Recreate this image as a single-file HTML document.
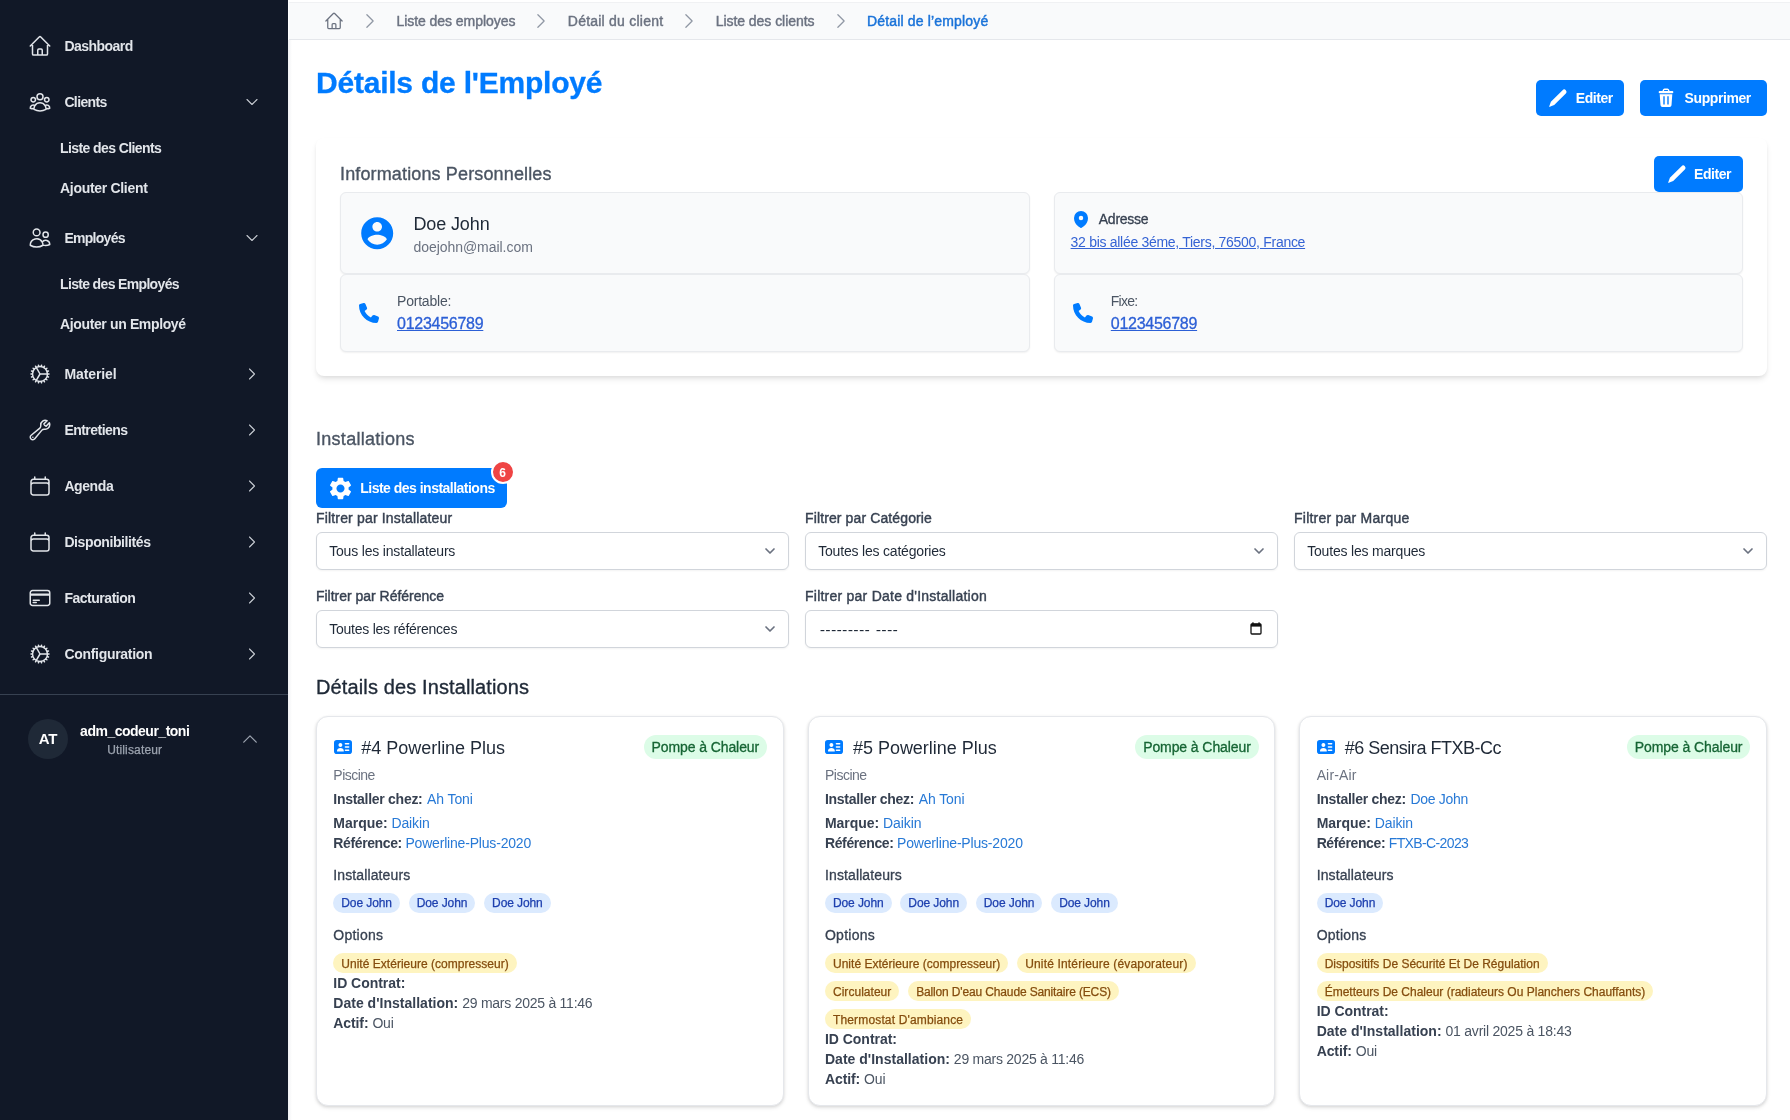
<!DOCTYPE html>
<html lang="fr">
<head>
<meta charset="utf-8">
<title>Détails de l'Employé</title>
<style>
*{box-sizing:border-box;margin:0;padding:0}
html,body{width:1790px;height:1120px;overflow:hidden;background:#fff}
body{font-family:"Liberation Sans",sans-serif;font-size:14px;color:#1f2937;position:relative}
a{text-decoration:none;color:inherit}
svg{display:block}
.abs{position:absolute}
/* ---------- sidebar ---------- */
#side{position:absolute;left:0;top:0;width:288px;height:1120px;background:#111827;color:#e5e7eb}
.nav{position:absolute;left:0;width:288px;height:24px;font-weight:700;font-size:14px;line-height:24px;letter-spacing:-.45px;white-space:nowrap}
.nav .ic{position:absolute;left:28px;top:0;width:24px;height:24px}
.nav .tx{position:absolute;left:64px;top:0}
.nav .ch{position:absolute;left:244px;top:4px;width:16px;height:16px}
.sub{position:absolute;left:60px;font-weight:700;font-size:14px;line-height:20px;letter-spacing:-.6px;white-space:nowrap}
#sdiv{position:absolute;left:0;top:694px;width:288px;height:1px;background:#374151}
#avatar{position:absolute;left:28px;top:719px;width:40px;height:40px;border-radius:50%;background:#1f2937;color:#fff;font-weight:700;font-size:15px;line-height:40px;text-align:center;letter-spacing:-.3px}
#uname{position:absolute;left:80px;top:721px;width:110px;text-align:center;font-weight:700;font-size:14px;line-height:20px;letter-spacing:-.5px;color:#fff;white-space:nowrap}
#urole{position:absolute;left:80px;top:741px;width:110px;text-align:center;font-size:12px;line-height:16px;color:#9ca3af;white-space:nowrap}
/* ---------- main ---------- */
#main{position:absolute;left:288px;top:0;width:1502px;height:1120px;background:#fff}
#lshadow{position:absolute;left:288px;top:40px;width:4px;height:1080px;background:linear-gradient(90deg,#f1f2f4,#fff)}
#crumb{position:absolute;left:289px;top:2px;width:1501px;height:38px;background:#f9fafb;border-top:1px solid #f0f1f3;border-bottom:1px solid #e5e7eb}
.bc{position:absolute;top:10px;font-size:14px;line-height:20px;color:#6b7280;white-space:nowrap;-webkit-text-stroke:.3px #6b7280}
.bc.cur{color:#1d78d9;-webkit-text-stroke:.35px #1d78d9}
.bsep{position:absolute;top:13px;width:10px;height:14px}
h1{position:absolute;left:316px;top:62px;font-size:30px;line-height:42px;font-weight:700;color:#007bff;letter-spacing:-.22px;white-space:nowrap;-webkit-text-stroke:.3px #007bff}
.btn{position:absolute;height:36px;border-radius:4px;background:#007bff;color:#fff;font-weight:700;font-size:14px;line-height:36px;letter-spacing:-.55px;white-space:nowrap}
.btn svg{position:absolute}
.btn span{position:absolute;top:0}

.t{position:absolute;white-space:nowrap}
.btn{border-radius:5px;background:#007bff}
.card{position:absolute;background:#fff;border-radius:8px;box-shadow:0 4px 6px -1px rgba(0,0,0,.1),0 2px 4px -1px rgba(0,0,0,.06)}
.ibox{position:absolute;background:#f9fafb;border:1px solid #e9ebee;border-radius:6px;box-shadow:0 1px 2px rgba(0,0,0,.06)}
.sel{position:absolute;width:473px;height:38px;background:#fff;border:1px solid #d1d5db;border-radius:6px;box-shadow:0 1px 2px rgba(0,0,0,.05)}
.icard{position:absolute;width:467.670px;height:390px;background:#fff;border:1px solid #e5e7eb;border-radius:12px;box-shadow:0 1px 3px rgba(0,0,0,.1),0 2px 4px rgba(0,0,0,.08)}
.tag{position:absolute;height:20px;border-radius:10px}
.tb{background:#dbeafe}.ty{background:#fef4c0}.tg{background:#dcfce7}
#root{position:absolute;left:0;top:0;width:1790px;height:1120px;will-change:transform}
</style>
</head>
<body>
<div id="root">
<div id="main"></div>
<div id="crumb"></div>
<div id="lshadow"></div>
<svg class="abs" style="left:324px;top:11px;width:20px;height:20px;color:#6b7280;" viewBox="0 0 24 24" fill="currentColor"><path fill="none" stroke="currentColor" stroke-width="1.5" stroke-linecap="round" stroke-linejoin="round" d="M2.25 12l8.954-8.955c.44-.439 1.152-.439 1.591 0L21.75 12M4.5 9.75v10.125c0 .621.504 1.125 1.125 1.125H9.75v-4.875c0-.621.504-1.125 1.125-1.125h2.25c.621 0 1.125.504 1.125 1.125V21h4.125c.621 0 1.125-.504 1.125-1.125V9.75M8.25 21h8.25"/></svg>
<svg class="abs" style="left:360px;top:11px;width:20px;height:20px;color:#9098a4;" viewBox="0 0 24 24" fill="currentColor"><path fill="none" stroke="currentColor" stroke-width="1.5" stroke-linecap="round" stroke-linejoin="round" d="M8.25 4.5l7.5 7.5-7.5 7.5"/></svg>
<svg class="abs" style="left:531px;top:11px;width:20px;height:20px;color:#9098a4;" viewBox="0 0 24 24" fill="currentColor"><path fill="none" stroke="currentColor" stroke-width="1.5" stroke-linecap="round" stroke-linejoin="round" d="M8.25 4.5l7.5 7.5-7.5 7.5"/></svg>
<svg class="abs" style="left:679px;top:11px;width:20px;height:20px;color:#9098a4;" viewBox="0 0 24 24" fill="currentColor"><path fill="none" stroke="currentColor" stroke-width="1.5" stroke-linecap="round" stroke-linejoin="round" d="M8.25 4.5l7.5 7.5-7.5 7.5"/></svg>
<svg class="abs" style="left:831px;top:11px;width:20px;height:20px;color:#9098a4;" viewBox="0 0 24 24" fill="currentColor"><path fill="none" stroke="currentColor" stroke-width="1.5" stroke-linecap="round" stroke-linejoin="round" d="M8.25 4.5l7.5 7.5-7.5 7.5"/></svg>
<span class="t" style="left:396.4px;top:10.6px;font-size:14px;line-height:20px;color:#6b7280;letter-spacing:-0.047px;-webkit-text-stroke:.42px currentColor;">Liste des employes</span>
<span class="t" style="left:567.8px;top:10.6px;font-size:14px;line-height:20px;color:#6b7280;letter-spacing:0.229px;-webkit-text-stroke:.42px currentColor;">Détail du client</span>
<span class="t" style="left:715.7px;top:10.6px;font-size:14px;line-height:20px;color:#6b7280;letter-spacing:-0.048px;-webkit-text-stroke:.42px currentColor;">Liste des clients</span>
<span class="t" style="left:867px;top:10.6px;font-size:14px;line-height:20px;color:#1a73d9;letter-spacing:0.163px;-webkit-text-stroke:.45px currentColor;">Détail de l’employé</span>
<h1>Détails de l'Employé</h1>
<div class="btn" style="left:1536px;top:80px;width:88px;height:36px"></div><svg class="abs" style="left:1546.3px;top:86.3px;width:24px;height:24px;color:#fff;" viewBox="0 0 24 24" fill="currentColor"><path d="M3 21L4.900 15.800L16.570 4.170A2.300 2.300 0 0 1 19.830 7.430L8.200 19.100Z"/></svg><span class="t" style="left:1575.8px;top:88.3px;font-size:14px;line-height:20px;color:#fff;font-weight:700;letter-spacing:-0.448px;">Editer</span>
<div class="btn" style="left:1640px;top:80px;width:127px;height:36px"></div><svg class="abs" style="left:1654.1px;top:86px;width:24px;height:24px;color:#fff;" viewBox="0 0 24 24" fill="currentColor"><path fill="none" stroke="currentColor" stroke-width="1.400" d="M9.300 5.400V4.600A1.300 1.300 0 0 1 10.600 3.300H13.400A1.300 1.300 0 0 1 14.700 4.600V5.400"/><rect x="4.700" y="5" width="14.600" height="2.300" rx="1"/><path fill-rule="evenodd" d="M5.700 8.300H18.300L17.500 19.300A1.900 1.900 0 0 1 15.600 21H8.400A1.900 1.900 0 0 1 6.500 19.300ZM9.300 10.300V18.500H10.700V10.300ZM13.300 10.300V18.500H14.700V10.300Z"/></svg><span class="t" style="left:1684.6px;top:88.3px;font-size:14px;line-height:20px;color:#fff;font-weight:700;letter-spacing:-0.424px;">Supprimer</span>
<div class="card" style="left:316px;top:138px;width:1451px;height:238px"></div>
<span class="t" style="left:340px;top:160.3px;font-size:18px;line-height:28px;color:#4b5563;letter-spacing:0.140px;-webkit-text-stroke:.35px currentColor;">Informations Personnelles</span>
<div class="btn" style="left:1654px;top:156px;width:89px;height:36px"></div><svg class="abs" style="left:1664.6px;top:162.3px;width:24px;height:24px;color:#fff;" viewBox="0 0 24 24" fill="currentColor"><path d="M3 21L4.900 15.800L16.570 4.170A2.300 2.300 0 0 1 19.830 7.430L8.200 19.100Z"/></svg><span class="t" style="left:1694.1px;top:164.3px;font-size:14px;line-height:20px;color:#fff;font-weight:700;letter-spacing:-0.448px;">Editer</span>
<div class="ibox" style="left:340px;top:192px;width:689.5px;height:82px"></div>
<div class="ibox" style="left:340px;top:274px;width:689.5px;height:78px"></div>
<div class="ibox" style="left:1053.5px;top:192px;width:689.5px;height:82px"></div>
<div class="ibox" style="left:1053.5px;top:274px;width:689.5px;height:78px"></div>
<svg class="abs" style="left:357.8px;top:213.8px;width:38.4px;height:38.4px;color:#007bff;" viewBox="0 0 24 24" fill="currentColor"><path d="M12 2C6.48 2 2 6.48 2 12s4.48 10 10 10 10-4.48 10-10S17.52 2 12 2zm0 3c1.66 0 3 1.34 3 3s-1.34 3-3 3-3-1.34-3-3 1.34-3 3-3zm0 14.2c-2.5 0-4.71-1.28-6-3.22.03-1.99 4-3.08 6-3.08 1.99 0 5.97 1.09 6 3.08-1.29 1.94-3.5 3.22-6 3.22z"/></svg>
<span class="t" style="left:413.4px;top:209.6px;font-size:18px;line-height:28px;color:#1f2937;letter-spacing:-0.108px;">Doe John</span>
<span class="t" style="left:413.4px;top:237.3px;font-size:14px;line-height:20px;color:#6b7280;letter-spacing:-0.040px;">doejohn@mail.com</span>
<svg class="abs" style="left:359px;top:303px;width:20px;height:20px;color:#007bff;" viewBox="0 0 512 512" fill="currentColor"><path d="M164.9 24.6c-7.7-18.6-28-28.5-47.4-23.2l-88 24C12.1 30.2 0 46 0 64C0 311.4 200.6 512 448 512c18 0 33.8-12.1 38.6-29.5l24-88c5.3-19.4-4.6-39.7-23.2-47.4l-96-40c-16.300-6.800-35.200-2.100-46.300 11.600L304.700 368C234.300 334.700 177.300 277.700 144 207.300L193.300 167c13.700-11.200 18.400-30 11.600-46.300l-40-96z"/></svg>
<span class="t" style="left:397px;top:291.3px;font-size:14px;line-height:20px;color:#4b5563;letter-spacing:-0.205px;">Portable:</span>
<span class="t" style="left:397px;top:311.6px;font-size:16px;line-height:24px;color:#2c5fd6;letter-spacing:-0.268px;text-decoration:underline;text-underline-offset:1px;-webkit-text-stroke:.3px currentColor;">0123456789</span>
<svg class="abs" style="left:1071px;top:209px;width:20px;height:20px;color:#007bff;" viewBox="0 0 20 20" fill="currentColor"><path fill-rule="evenodd" clip-rule="evenodd" d="M9.69 18.933l.003.001C9.89 19.02 10 19 10 19s.11.02.308-.066l.002-.001.006-.003.018-.008a5.741 5.741 0 00.281-.14c.186-.096.446-.24.757-.433.62-.384 1.445-.966 2.274-1.765C15.302 14.988 17 12.493 17 9A7 7 0 103 9c0 3.492 1.698 5.988 3.355 7.584a13.731 13.731 0 002.273 1.765 11.842 11.842 0 00.976.544l.062.029.018.008.006.003zM10 11.250a2.250 2.250 0 100-4.500 2.250 2.250 0 000 4.500z"/></svg>
<span class="t" style="left:1098.8px;top:209.3px;font-size:14px;line-height:20px;color:#374151;letter-spacing:-0.266px;-webkit-text-stroke:.3px currentColor;">Adresse</span>
<span class="t" style="left:1070.6px;top:231.8px;font-size:14px;line-height:20px;color:#3563d4;letter-spacing:-0.293px;text-decoration:underline;text-underline-offset:1px;">32 bis allée 3éme, Tiers, 76500, France</span>
<svg class="abs" style="left:1073.2px;top:303px;width:20px;height:20px;color:#007bff;" viewBox="0 0 512 512" fill="currentColor"><path d="M164.9 24.6c-7.7-18.6-28-28.5-47.4-23.2l-88 24C12.1 30.2 0 46 0 64C0 311.4 200.6 512 448 512c18 0 33.8-12.1 38.6-29.5l24-88c5.3-19.4-4.6-39.7-23.2-47.4l-96-40c-16.300-6.800-35.200-2.100-46.300 11.600L304.700 368C234.300 334.700 177.300 277.700 144 207.300L193.300 167c13.700-11.200 18.400-30 11.600-46.300l-40-96z"/></svg>
<span class="t" style="left:1110.8px;top:291.3px;font-size:14px;line-height:20px;color:#4b5563;letter-spacing:-0.729px;">Fixe:</span>
<span class="t" style="left:1110.8px;top:311.6px;font-size:16px;line-height:24px;color:#2c5fd6;letter-spacing:-0.268px;text-decoration:underline;text-underline-offset:1px;-webkit-text-stroke:.3px currentColor;">0123456789</span>
<span class="t" style="left:316px;top:424.7px;font-size:18px;line-height:28px;color:#4b5563;letter-spacing:0.287px;-webkit-text-stroke:.35px currentColor;">Installations</span>
<div class="btn" style="left:316px;top:468px;width:191px;height:40px;border-radius:6px"></div>
<svg class="abs" style="left:326.5px;top:474.5px;width:27px;height:27px;color:#fff;" viewBox="0 0 24 24" fill="currentColor"><path d="M19.14 12.94c.04-.3.06-.61.06-.94 0-.32-.02-.64-.07-.94l2.030-1.580c.180-.140.230-.410.120-.610l-1.920-3.320c-.120-.220-.370-.290-.590-.220l-2.390.960c-.500-.380-1.030-.700-1.620-.940l-.360-2.540c-.040-.240-.240-.410-.480-.410h-3.840c-.240 0-.430.170-.470.410l-.360 2.540c-.590.240-1.130.570-1.620.940l-2.390-.960c-.220-.080-.470 0-.590.220L2.740 8.870c-.120.210-.080.470.120.610l2.030 1.580c-.050.300-.090.630-.090.940s.020.640.070.940l-2.030 1.580c-.180.140-.230.410-.120.610l1.920 3.320c.120.220.370.290.590.220l2.390-.960c.500.380 1.030.700 1.620.940l.360 2.540c.050.240.240.410.480.410h3.840c.240 0 .440-.170.470-.410l.360-2.540c.590-.240 1.130-.560 1.620-.940l2.390.960c.220.080.470 0 .590-.220l1.920-3.320c.120-.220.070-.470-.120-.610l-2.010-1.580zM12 15.600c-1.980 0-3.600-1.620-3.600-3.600s1.620-3.600 3.600-3.600 3.600 1.620 3.600 3.600-1.620 3.600-3.600 3.600z"/></svg>
<span class="t" style="left:360.3px;top:478.3px;font-size:14px;line-height:20px;color:#fff;font-weight:700;letter-spacing:-0.516px;">Liste des installations</span>
<div class="abs" style="left:491px;top:460px;width:24px;height:24px;border-radius:50%;background:#ef4444;border:2px solid #fff"></div>
<span class="t" style="left:499.3px;top:465.7px;font-size:12px;line-height:14px;color:#fff;font-weight:700;letter-spacing:-0.487px;">6</span>
<span class="t" style="left:316px;top:507.7px;font-size:14px;line-height:20px;color:#374151;letter-spacing:0.167px;-webkit-text-stroke:.4px currentColor;">Filtrer par Installateur</span><div class="sel" style="left:316px;top:532px"></div><span class="t" style="left:329.2px;top:541.1px;font-size:14px;line-height:20px;color:#1f2937;letter-spacing:-0.180px;">Tous les installateurs</span><svg class="abs" style="left:759.7px;top:541px;width:20px;height:20px;color:#6b7280;" viewBox="0 0 20 20" fill="currentColor"><path fill="none" stroke="currentColor" stroke-width="1.700" stroke-linecap="round" stroke-linejoin="round" d="M6 8l4 4 4-4"/></svg>
<span class="t" style="left:805px;top:507.7px;font-size:14px;line-height:20px;color:#374151;letter-spacing:0.119px;-webkit-text-stroke:.4px currentColor;">Filtrer par Catégorie</span><div class="sel" style="left:805px;top:532px"></div><span class="t" style="left:818.2px;top:541.1px;font-size:14px;line-height:20px;color:#1f2937;letter-spacing:-0.192px;">Toutes les catégories</span><svg class="abs" style="left:1248.7px;top:541px;width:20px;height:20px;color:#6b7280;" viewBox="0 0 20 20" fill="currentColor"><path fill="none" stroke="currentColor" stroke-width="1.700" stroke-linecap="round" stroke-linejoin="round" d="M6 8l4 4 4-4"/></svg>
<span class="t" style="left:1294px;top:507.7px;font-size:14px;line-height:20px;color:#374151;letter-spacing:0.235px;-webkit-text-stroke:.4px currentColor;">Filtrer par Marque</span><div class="sel" style="left:1294px;top:532px"></div><span class="t" style="left:1307.2px;top:541.1px;font-size:14px;line-height:20px;color:#1f2937;letter-spacing:-0.189px;">Toutes les marques</span><svg class="abs" style="left:1737.7px;top:541px;width:20px;height:20px;color:#6b7280;" viewBox="0 0 20 20" fill="currentColor"><path fill="none" stroke="currentColor" stroke-width="1.700" stroke-linecap="round" stroke-linejoin="round" d="M6 8l4 4 4-4"/></svg>
<span class="t" style="left:316px;top:586.3px;font-size:14px;line-height:20px;color:#374151;letter-spacing:-0.019px;-webkit-text-stroke:.4px currentColor;">Filtrer par Référence</span><div class="sel" style="left:316px;top:610px"></div><span class="t" style="left:329.2px;top:619.1px;font-size:14px;line-height:20px;color:#1f2937;letter-spacing:-0.242px;">Toutes les références</span><svg class="abs" style="left:759.7px;top:619px;width:20px;height:20px;color:#6b7280;" viewBox="0 0 20 20" fill="currentColor"><path fill="none" stroke="currentColor" stroke-width="1.700" stroke-linecap="round" stroke-linejoin="round" d="M6 8l4 4 4-4"/></svg>
<span class="t" style="left:805px;top:586.3px;font-size:14px;line-height:20px;color:#374151;letter-spacing:0.237px;-webkit-text-stroke:.4px currentColor;">Filtrer par Date d'Installation</span><div class="sel" style="left:805px;top:610px"></div><span class="t" style="left:818.2px;top:620.6px;font-size:14px;line-height:20px;color:#1f2937;letter-spacing:-2.795px;font-family:'Liberation Mono',monospace;">--------- ----</span><svg class="abs" style="left:1250.2px;top:622.3px;width:12px;height:13px" viewBox="0 0 12 13"><rect x="1" y="1.800" width="10" height="10.200" rx="1" fill="none" stroke="#111" stroke-width="1.300"/><rect x="1" y="1.800" width="10" height="2.800" fill="#111"/><rect x="2.300" y="0.300" width="1.300" height="2" fill="#111"/><rect x="8.400" y="0.300" width="1.300" height="2" fill="#111"/></svg>
<span class="t" style="left:316px;top:673.3px;font-size:20px;line-height:28px;color:#1f2937;letter-spacing:0.124px;-webkit-text-stroke:.35px currentColor;">Détails des Installations</span>
<div class="icard" style="left:316px;top:716px"></div><svg class="abs" style="left:333.8px;top:738.6px;width:18px;height:16px;color:#007bff;" viewBox="0 0 576 512" fill="currentColor"><path fill-rule="evenodd" d="M90 32H486A90 90 0 0 1 576 122V390A90 90 0 0 1 486 480H90A90 90 0 0 1 0 390V122A90 90 0 0 1 90 32ZM205 130a62 62 0 1 0 .1 0ZM95 385c0-62 50-100 110-100s110 38 110 100c0 12-8 18-18 18H113c-10 0-18-6-18-18ZM365 130H470a18 18 0 0 1 0 46H365a18 18 0 0 1 0-46ZM365 232H470a18 18 0 0 1 0 46H365a18 18 0 0 1 0-46ZM365 334H470a18 18 0 0 1 0 46H365a18 18 0 0 1 0-46Z"/></svg><span class="t" style="left:361.3px;top:733.6px;font-size:18px;line-height:28px;color:#1f2937;letter-spacing:-0.023px;">#4 Powerline Plus</span><div class="tag tg" style="left:643.6px;top:735px;width:123.400px;height:24px;border-radius:12px"></div><span class="t" style="left:651.4999999999999px;top:737.2px;font-size:14px;line-height:20px;color:#166534;letter-spacing:-0.090px;-webkit-text-stroke:.3px currentColor;">Pompe à Chaleur</span><span class="t" style="left:333.3px;top:765.3px;font-size:14px;line-height:20px;color:#6b7280;letter-spacing:-0.506px;">Piscine</span><span class="t" style="left:333.3px;top:789.3px;font-size:14px;line-height:20px;color:#374151;font-weight:700;letter-spacing:-0.278px;">Installer chez:</span><span class="t" style="left:427.1px;top:789.3px;font-size:14px;line-height:20px;color:#2779d6;letter-spacing:-0.108px;">Ah Toni</span><span class="t" style="left:333.3px;top:813.3px;font-size:14px;line-height:20px;color:#374151;font-weight:700;letter-spacing:-0.022px;">Marque:</span><span class="t" style="left:391.40000000000003px;top:813.3px;font-size:14px;line-height:20px;color:#2779d6;letter-spacing:-0.101px;">Daikin</span><span class="t" style="left:333.3px;top:833.2px;font-size:14px;line-height:20px;color:#374151;font-weight:700;letter-spacing:-0.378px;">Référence:</span><span class="t" style="left:405.4px;top:833.2px;font-size:14px;line-height:20px;color:#2779d6;letter-spacing:-0.184px;">Powerline-Plus-2020</span><span class="t" style="left:333.3px;top:865.2px;font-size:14px;line-height:20px;color:#374151;letter-spacing:0.117px;-webkit-text-stroke:.3px currentColor;">Installateurs</span><div class="tag tb" style="left:333.3px;top:893.2px;width:66.6px"></div><span class="t" style="left:341.3px;top:895.4px;font-size:12px;line-height:16px;color:#1e40af;letter-spacing:-0.097px;-webkit-text-stroke:.25px currentColor;">Doe John</span><div class="tag tb" style="left:408.7px;top:893.2px;width:66.6px"></div><span class="t" style="left:416.7px;top:895.4px;font-size:12px;line-height:16px;color:#1e40af;letter-spacing:-0.097px;-webkit-text-stroke:.25px currentColor;">Doe John</span><div class="tag tb" style="left:484.1px;top:893.2px;width:66.6px"></div><span class="t" style="left:492.09999999999997px;top:895.4px;font-size:12px;line-height:16px;color:#1e40af;letter-spacing:-0.097px;-webkit-text-stroke:.25px currentColor;">Doe John</span><span class="t" style="left:333.3px;top:925.2px;font-size:14px;line-height:20px;color:#374151;letter-spacing:0.250px;-webkit-text-stroke:.3px currentColor;">Options</span><div class="tag ty" style="left:333.3px;top:953.3px;width:183.4px"></div><span class="t" style="left:341.3px;top:955.5px;font-size:12px;line-height:16px;color:#854d0e;letter-spacing:0.022px;-webkit-text-stroke:.25px currentColor;">Unité Extérieure (compresseur)</span><span class="t" style="left:333.3px;top:973.3px;font-size:14px;line-height:20px;color:#374151;font-weight:700;letter-spacing:-0.030px;">ID Contrat:</span><span class="t" style="left:333.3px;top:993.3px;font-size:14px;line-height:20px;color:#374151;font-weight:700;letter-spacing:0.016px;">Date d'Installation:</span><span class="t" style="left:462.2px;top:993.3px;font-size:14px;line-height:20px;color:#4b5563;letter-spacing:-0.249px;">29 mars 2025 à 11:46</span><span class="t" style="left:333.3px;top:1013.3px;font-size:14px;line-height:20px;color:#374151;font-weight:700;letter-spacing:-0.097px;">Actif:</span><span class="t" style="left:372.4px;top:1013.3px;font-size:14px;line-height:20px;color:#4b5563;letter-spacing:-0.166px;">Oui</span>
<div class="icard" style="left:807.67px;top:716px"></div><svg class="abs" style="left:825.47px;top:738.6px;width:18px;height:16px;color:#007bff;" viewBox="0 0 576 512" fill="currentColor"><path fill-rule="evenodd" d="M90 32H486A90 90 0 0 1 576 122V390A90 90 0 0 1 486 480H90A90 90 0 0 1 0 390V122A90 90 0 0 1 90 32ZM205 130a62 62 0 1 0 .1 0ZM95 385c0-62 50-100 110-100s110 38 110 100c0 12-8 18-18 18H113c-10 0-18-6-18-18ZM365 130H470a18 18 0 0 1 0 46H365a18 18 0 0 1 0-46ZM365 232H470a18 18 0 0 1 0 46H365a18 18 0 0 1 0-46ZM365 334H470a18 18 0 0 1 0 46H365a18 18 0 0 1 0-46Z"/></svg><span class="t" style="left:852.9699999999999px;top:733.6px;font-size:18px;line-height:28px;color:#1f2937;letter-spacing:-0.023px;">#5 Powerline Plus</span><div class="tag tg" style="left:1135.27px;top:735px;width:123.400px;height:24px;border-radius:12px"></div><span class="t" style="left:1143.17px;top:737.2px;font-size:14px;line-height:20px;color:#166534;letter-spacing:-0.090px;-webkit-text-stroke:.3px currentColor;">Pompe à Chaleur</span><span class="t" style="left:824.9699999999999px;top:765.3px;font-size:14px;line-height:20px;color:#6b7280;letter-spacing:-0.506px;">Piscine</span><span class="t" style="left:824.9699999999999px;top:789.3px;font-size:14px;line-height:20px;color:#374151;font-weight:700;letter-spacing:-0.278px;">Installer chez:</span><span class="t" style="left:918.77px;top:789.3px;font-size:14px;line-height:20px;color:#2779d6;letter-spacing:-0.108px;">Ah Toni</span><span class="t" style="left:824.9699999999999px;top:813.3px;font-size:14px;line-height:20px;color:#374151;font-weight:700;letter-spacing:-0.022px;">Marque:</span><span class="t" style="left:883.0699999999998px;top:813.3px;font-size:14px;line-height:20px;color:#2779d6;letter-spacing:-0.101px;">Daikin</span><span class="t" style="left:824.9699999999999px;top:833.2px;font-size:14px;line-height:20px;color:#374151;font-weight:700;letter-spacing:-0.378px;">Référence:</span><span class="t" style="left:897.0699999999999px;top:833.2px;font-size:14px;line-height:20px;color:#2779d6;letter-spacing:-0.184px;">Powerline-Plus-2020</span><span class="t" style="left:824.9699999999999px;top:865.2px;font-size:14px;line-height:20px;color:#374151;letter-spacing:0.117px;-webkit-text-stroke:.3px currentColor;">Installateurs</span><div class="tag tb" style="left:824.97px;top:893.2px;width:66.6px"></div><span class="t" style="left:832.9699999999999px;top:895.4px;font-size:12px;line-height:16px;color:#1e40af;letter-spacing:-0.097px;-webkit-text-stroke:.25px currentColor;">Doe John</span><div class="tag tb" style="left:900.37px;top:893.2px;width:66.6px"></div><span class="t" style="left:908.3699999999999px;top:895.4px;font-size:12px;line-height:16px;color:#1e40af;letter-spacing:-0.097px;-webkit-text-stroke:.25px currentColor;">Doe John</span><div class="tag tb" style="left:975.77px;top:893.2px;width:66.6px"></div><span class="t" style="left:983.7699999999999px;top:895.4px;font-size:12px;line-height:16px;color:#1e40af;letter-spacing:-0.097px;-webkit-text-stroke:.25px currentColor;">Doe John</span><div class="tag tb" style="left:1051.17px;top:893.2px;width:66.6px"></div><span class="t" style="left:1059.1699999999998px;top:895.4px;font-size:12px;line-height:16px;color:#1e40af;letter-spacing:-0.097px;-webkit-text-stroke:.25px currentColor;">Doe John</span><span class="t" style="left:824.9699999999999px;top:925.2px;font-size:14px;line-height:20px;color:#374151;letter-spacing:0.250px;-webkit-text-stroke:.3px currentColor;">Options</span><div class="tag ty" style="left:824.97px;top:953.3px;width:183.4px"></div><span class="t" style="left:832.9699999999999px;top:955.5px;font-size:12px;line-height:16px;color:#854d0e;letter-spacing:0.022px;-webkit-text-stroke:.25px currentColor;">Unité Extérieure (compresseur)</span><div class="tag ty" style="left:1017.17px;top:953.3px;width:178.4px"></div><span class="t" style="left:1025.17px;top:955.5px;font-size:12px;line-height:16px;color:#854d0e;letter-spacing:0.166px;-webkit-text-stroke:.25px currentColor;">Unité Intérieure (évaporateur)</span><div class="tag ty" style="left:824.97px;top:981.3px;width:74.4px"></div><span class="t" style="left:832.9699999999999px;top:983.5px;font-size:12px;line-height:16px;color:#854d0e;letter-spacing:0.034px;-webkit-text-stroke:.25px currentColor;">Circulateur</span><div class="tag ty" style="left:908.17px;top:981.3px;width:210.7px"></div><span class="t" style="left:916.17px;top:983.5px;font-size:12px;line-height:16px;color:#854d0e;letter-spacing:-0.144px;-webkit-text-stroke:.25px currentColor;">Ballon D'eau Chaude Sanitaire (ECS)</span><div class="tag ty" style="left:824.97px;top:1009.3px;width:146.2px"></div><span class="t" style="left:832.9699999999999px;top:1011.5px;font-size:12px;line-height:16px;color:#854d0e;letter-spacing:0.152px;-webkit-text-stroke:.25px currentColor;">Thermostat D'ambiance</span><span class="t" style="left:824.9699999999999px;top:1029.3px;font-size:14px;line-height:20px;color:#374151;font-weight:700;letter-spacing:-0.030px;">ID Contrat:</span><span class="t" style="left:824.9699999999999px;top:1049.3px;font-size:14px;line-height:20px;color:#374151;font-weight:700;letter-spacing:0.016px;">Date d'Installation:</span><span class="t" style="left:953.8699999999999px;top:1049.3px;font-size:14px;line-height:20px;color:#4b5563;letter-spacing:-0.249px;">29 mars 2025 à 11:46</span><span class="t" style="left:824.9699999999999px;top:1069.3px;font-size:14px;line-height:20px;color:#374151;font-weight:700;letter-spacing:-0.097px;">Actif:</span><span class="t" style="left:864.0699999999999px;top:1069.3px;font-size:14px;line-height:20px;color:#4b5563;letter-spacing:-0.166px;">Oui</span>
<div class="icard" style="left:1299.33px;top:716px"></div><svg class="abs" style="left:1317.13px;top:738.6px;width:18px;height:16px;color:#007bff;" viewBox="0 0 576 512" fill="currentColor"><path fill-rule="evenodd" d="M90 32H486A90 90 0 0 1 576 122V390A90 90 0 0 1 486 480H90A90 90 0 0 1 0 390V122A90 90 0 0 1 90 32ZM205 130a62 62 0 1 0 .1 0ZM95 385c0-62 50-100 110-100s110 38 110 100c0 12-8 18-18 18H113c-10 0-18-6-18-18ZM365 130H470a18 18 0 0 1 0 46H365a18 18 0 0 1 0-46ZM365 232H470a18 18 0 0 1 0 46H365a18 18 0 0 1 0-46ZM365 334H470a18 18 0 0 1 0 46H365a18 18 0 0 1 0-46Z"/></svg><span class="t" style="left:1344.6299999999999px;top:733.6px;font-size:18px;line-height:28px;color:#1f2937;letter-spacing:-0.476px;">#6 Sensira FTXB-Cc</span><div class="tag tg" style="left:1626.93px;top:735px;width:123.400px;height:24px;border-radius:12px"></div><span class="t" style="left:1634.83px;top:737.2px;font-size:14px;line-height:20px;color:#166534;letter-spacing:-0.090px;-webkit-text-stroke:.3px currentColor;">Pompe à Chaleur</span><span class="t" style="left:1316.6299999999999px;top:765.3px;font-size:14px;line-height:20px;color:#6b7280;letter-spacing:0.158px;">Air-Air</span><span class="t" style="left:1316.6299999999999px;top:789.3px;font-size:14px;line-height:20px;color:#374151;font-weight:700;letter-spacing:-0.278px;">Installer chez:</span><span class="t" style="left:1410.4299999999998px;top:789.3px;font-size:14px;line-height:20px;color:#2779d6;letter-spacing:-0.305px;">Doe John</span><span class="t" style="left:1316.6299999999999px;top:813.3px;font-size:14px;line-height:20px;color:#374151;font-weight:700;letter-spacing:-0.022px;">Marque:</span><span class="t" style="left:1374.7299999999998px;top:813.3px;font-size:14px;line-height:20px;color:#2779d6;letter-spacing:-0.101px;">Daikin</span><span class="t" style="left:1316.6299999999999px;top:833.2px;font-size:14px;line-height:20px;color:#374151;font-weight:700;letter-spacing:-0.378px;">Référence:</span><span class="t" style="left:1388.7299999999998px;top:833.2px;font-size:14px;line-height:20px;color:#2779d6;letter-spacing:-0.624px;">FTXB-C-2023</span><span class="t" style="left:1316.6299999999999px;top:865.2px;font-size:14px;line-height:20px;color:#374151;letter-spacing:0.117px;-webkit-text-stroke:.3px currentColor;">Installateurs</span><div class="tag tb" style="left:1316.63px;top:893.2px;width:66.6px"></div><span class="t" style="left:1324.6299999999999px;top:895.4px;font-size:12px;line-height:16px;color:#1e40af;letter-spacing:-0.097px;-webkit-text-stroke:.25px currentColor;">Doe John</span><span class="t" style="left:1316.6299999999999px;top:925.2px;font-size:14px;line-height:20px;color:#374151;letter-spacing:0.250px;-webkit-text-stroke:.3px currentColor;">Options</span><div class="tag ty" style="left:1316.63px;top:953.3px;width:231px"></div><span class="t" style="left:1324.6299999999999px;top:955.5px;font-size:12px;line-height:16px;color:#854d0e;letter-spacing:0.006px;-webkit-text-stroke:.25px currentColor;">Dispositifs De Sécurité Et De Régulation</span><div class="tag ty" style="left:1316.63px;top:981.3px;width:336.5px"></div><span class="t" style="left:1324.6299999999999px;top:983.5px;font-size:12px;line-height:16px;color:#854d0e;-webkit-text-stroke:.25px currentColor;">Émetteurs De Chaleur (radiateurs Ou Planchers Chauffants)</span><span class="t" style="left:1316.6299999999999px;top:1001.3px;font-size:14px;line-height:20px;color:#374151;font-weight:700;letter-spacing:-0.030px;">ID Contrat:</span><span class="t" style="left:1316.6299999999999px;top:1021.3px;font-size:14px;line-height:20px;color:#374151;font-weight:700;letter-spacing:0.016px;">Date d'Installation:</span><span class="t" style="left:1445.53px;top:1021.3px;font-size:14px;line-height:20px;color:#4b5563;letter-spacing:-0.227px;">01 avril 2025 à 18:43</span><span class="t" style="left:1316.6299999999999px;top:1041.3px;font-size:14px;line-height:20px;color:#374151;font-weight:700;letter-spacing:-0.097px;">Actif:</span><span class="t" style="left:1355.73px;top:1041.3px;font-size:14px;line-height:20px;color:#4b5563;letter-spacing:-0.166px;">Oui</span>
<div id="side"></div>
<svg class="abs" style="left:28px;top:34px;width:24px;height:24px;color:#e2e5ea" viewBox="0 0 24 24" fill="none" stroke="currentColor" stroke-width="1.5" stroke-linecap="round" stroke-linejoin="round"><path d="M2.25 12l8.954-8.955c.44-.439 1.152-.439 1.591 0L21.75 12M4.5 9.75v10.125c0 .621.504 1.125 1.125 1.125H9.75v-4.875c0-.621.504-1.125 1.125-1.125h2.25c.621 0 1.125.504 1.125 1.125V21h4.125c.621 0 1.125-.504 1.125-1.125V9.75M8.25 21h8.25"/></svg>
<span class="t" style="left:64.4px;top:34.2px;font-size:14px;line-height:24px;color:#e2e5ea;font-weight:700;letter-spacing:-0.536px;">Dashboard</span>
<svg class="abs" style="left:28px;top:90px;width:24px;height:24px;color:#e2e5ea" viewBox="0 0 24 24" fill="none" stroke="currentColor" stroke-width="1.5" stroke-linecap="round" stroke-linejoin="round"><path d="M18 18.72a9.094 9.094 0 003.741-.479 3 3 0 00-4.682-2.72m.94 3.198l.001.031c0 .225-.012.447-.037.666A11.944 11.944 0 0112 21c-2.17 0-4.207-.576-5.963-1.584A6.062 6.062 0 016 18.719m12 0a5.971 5.971 0 00-.941-3.197m0 0A5.995 5.995 0 0012 12.75a5.995 5.995 0 00-5.058 2.772m0 0a3 3 0 00-4.681 2.72 8.986 8.986 0 003.74.477m.94-3.197a5.971 5.971 0 00-.94 3.197M15 6.75a3 3 0 11-6 0 3 3 0 016 0zm6 3a2.25 2.25 0 11-4.5 0 2.25 2.25 0 014.5 0zm-13.5 0a2.25 2.25 0 11-4.5 0 2.25 2.25 0 014.5 0z"/></svg>
<span class="t" style="left:64.4px;top:90.2px;font-size:14px;line-height:24px;color:#e2e5ea;font-weight:700;letter-spacing:-0.627px;">Clients</span>
<svg class="abs" style="left:244px;top:94px;width:16px;height:16px;color:#c9cdd4" viewBox="0 0 24 24" fill="none" stroke="currentColor" stroke-width="1.6" stroke-linecap="round" stroke-linejoin="round"><path d="M19.5 8.25l-7.5 7.5-7.5-7.5"/></svg>
<svg class="abs" style="left:28px;top:226px;width:24px;height:24px;color:#e2e5ea" viewBox="0 0 24 24" fill="none" stroke="currentColor" stroke-width="1.5" stroke-linecap="round" stroke-linejoin="round"><path d="M15 19.128a9.38 9.38 0 002.625.372 9.337 9.337 0 004.121-.952 4.125 4.125 0 00-7.533-2.493M15 19.128v-.003c0-1.113-.285-2.16-.786-3.07M15 19.128v.106A12.318 12.318 0 018.624 21c-2.331 0-4.512-.645-6.374-1.766l-.001-.109a6.375 6.375 0 0111.964-3.07M12 6.375a3.375 3.375 0 11-6.75 0 3.375 3.375 0 016.75 0zm8.25 2.25a2.625 2.625 0 11-5.25 0 2.625 2.625 0 015.25 0z"/></svg>
<span class="t" style="left:64.4px;top:226.2px;font-size:14px;line-height:24px;color:#e2e5ea;font-weight:700;letter-spacing:-0.718px;">Employés</span>
<svg class="abs" style="left:244px;top:230px;width:16px;height:16px;color:#c9cdd4" viewBox="0 0 24 24" fill="none" stroke="currentColor" stroke-width="1.6" stroke-linecap="round" stroke-linejoin="round"><path d="M19.5 8.25l-7.5 7.5-7.5-7.5"/></svg>
<svg class="abs" style="left:28px;top:362px;width:24px;height:24px;color:#e2e5ea" viewBox="0 0 24 24" fill="none" stroke="currentColor" stroke-width="1.5" stroke-linecap="round" stroke-linejoin="round"><path d="M4.5 12a7.5 7.5 0 0015 0m-15 0a7.5 7.5 0 1115 0m-15 0H3m16.5 0H21m-1.5 0H12m-8.457 3.077l1.41-.513m14.095-5.13l1.41-.513M5.106 17.785l1.15-.964m11.49-9.642l1.149-.964M7.501 19.795l.75-1.3m7.5-12.99l.75-1.3m-6.063 16.658l.26-1.477m2.605-14.772l.26-1.477m0 17.726l-.26-1.477M10.698 4.614l-.26-1.477M16.5 19.794l-.75-1.299M7.5 4.205L12 12m6.894 5.785l-1.149-.964M6.256 7.178l-1.15-.964m15.352 8.864l-1.41-.513M4.954 9.435l-1.41-.514M12.002 12l-3.75 6.495"/></svg>
<span class="t" style="left:64.4px;top:362.2px;font-size:14px;line-height:24px;color:#e2e5ea;font-weight:700;letter-spacing:-0.090px;">Materiel</span>
<svg class="abs" style="left:244px;top:366px;width:16px;height:16px;color:#c9cdd4" viewBox="0 0 24 24" fill="none" stroke="currentColor" stroke-width="1.6" stroke-linecap="round" stroke-linejoin="round"><path d="M8.25 4.5l7.5 7.5-7.5 7.5"/></svg>
<svg class="abs" style="left:28px;top:418px;width:24px;height:24px;color:#e2e5ea" viewBox="0 0 24 24" fill="none" stroke="currentColor" stroke-width="1.5" stroke-linecap="round" stroke-linejoin="round"><path d="M21.75 6.75a4.5 4.5 0 01-4.884 4.484c-1.076-.091-2.264.071-2.95.904l-7.152 8.684a2.548 2.548 0 11-3.586-3.586l8.684-7.152c.833-.686.995-1.874.904-2.95a4.5 4.5 0 016.336-4.486l-3.276 3.276a3.004 3.004 0 002.25 2.25l3.276-3.276c.256.565.398 1.192.398 1.852z"/><path d="M4.867 19.125h.008v.008h-.008v-.008z"/></svg>
<span class="t" style="left:64.4px;top:418.2px;font-size:14px;line-height:24px;color:#e2e5ea;font-weight:700;letter-spacing:-0.527px;">Entretiens</span>
<svg class="abs" style="left:244px;top:422px;width:16px;height:16px;color:#c9cdd4" viewBox="0 0 24 24" fill="none" stroke="currentColor" stroke-width="1.6" stroke-linecap="round" stroke-linejoin="round"><path d="M8.25 4.5l7.5 7.5-7.5 7.5"/></svg>
<svg class="abs" style="left:28px;top:474px;width:24px;height:24px;color:#e2e5ea" viewBox="0 0 24 24" fill="none" stroke="currentColor" stroke-width="1.5" stroke-linecap="round" stroke-linejoin="round"><path d="M6.75 3v2.25M17.25 3v2.25M3 18.75V7.5a2.25 2.25 0 012.25-2.25h13.5A2.25 2.25 0 0121 7.5v11.25m-18 0A2.25 2.25 0 005.25 21h13.5A2.25 2.25 0 0021 18.75m-18 0v-7.5A2.25 2.25 0 015.25 9h13.5A2.25 2.25 0 0121 11.25v7.5"/></svg>
<span class="t" style="left:64.4px;top:474.2px;font-size:14px;line-height:24px;color:#e2e5ea;font-weight:700;letter-spacing:-0.407px;">Agenda</span>
<svg class="abs" style="left:244px;top:478px;width:16px;height:16px;color:#c9cdd4" viewBox="0 0 24 24" fill="none" stroke="currentColor" stroke-width="1.6" stroke-linecap="round" stroke-linejoin="round"><path d="M8.25 4.5l7.5 7.5-7.5 7.5"/></svg>
<svg class="abs" style="left:28px;top:530px;width:24px;height:24px;color:#e2e5ea" viewBox="0 0 24 24" fill="none" stroke="currentColor" stroke-width="1.5" stroke-linecap="round" stroke-linejoin="round"><path d="M6.75 3v2.25M17.25 3v2.25M3 18.75V7.5a2.25 2.25 0 012.25-2.25h13.5A2.25 2.25 0 0121 7.5v11.25m-18 0A2.25 2.25 0 005.25 21h13.5A2.25 2.25 0 0021 18.75m-18 0v-7.5A2.25 2.25 0 015.25 9h13.5A2.25 2.25 0 0121 11.25v7.5"/></svg>
<span class="t" style="left:64.4px;top:530.2px;font-size:14px;line-height:24px;color:#e2e5ea;font-weight:700;letter-spacing:-0.400px;">Disponibilités</span>
<svg class="abs" style="left:244px;top:534px;width:16px;height:16px;color:#c9cdd4" viewBox="0 0 24 24" fill="none" stroke="currentColor" stroke-width="1.6" stroke-linecap="round" stroke-linejoin="round"><path d="M8.25 4.5l7.5 7.5-7.5 7.5"/></svg>
<svg class="abs" style="left:28px;top:586px;width:24px;height:24px;color:#e2e5ea" viewBox="0 0 24 24" fill="none" stroke="currentColor" stroke-width="1.5" stroke-linecap="round" stroke-linejoin="round"><path d="M2.25 8.25h19.5M2.25 9h19.5m-16.5 5.25h6m-6 2.25h3m-3.75 3h15a2.25 2.25 0 002.25-2.25V6.75A2.25 2.25 0 0019.5 4.5h-15a2.25 2.25 0 00-2.25 2.25v10.5A2.25 2.25 0 004.5 19.5z"/></svg>
<span class="t" style="left:64.4px;top:586.2px;font-size:14px;line-height:24px;color:#e2e5ea;font-weight:700;letter-spacing:-0.476px;">Facturation</span>
<svg class="abs" style="left:244px;top:590px;width:16px;height:16px;color:#c9cdd4" viewBox="0 0 24 24" fill="none" stroke="currentColor" stroke-width="1.6" stroke-linecap="round" stroke-linejoin="round"><path d="M8.25 4.5l7.5 7.5-7.5 7.5"/></svg>
<svg class="abs" style="left:28px;top:642px;width:24px;height:24px;color:#e2e5ea" viewBox="0 0 24 24" fill="none" stroke="currentColor" stroke-width="1.5" stroke-linecap="round" stroke-linejoin="round"><path d="M4.5 12a7.5 7.5 0 0015 0m-15 0a7.5 7.5 0 1115 0m-15 0H3m16.5 0H21m-1.5 0H12m-8.457 3.077l1.41-.513m14.095-5.13l1.41-.513M5.106 17.785l1.15-.964m11.49-9.642l1.149-.964M7.501 19.795l.75-1.3m7.5-12.99l.75-1.3m-6.063 16.658l.26-1.477m2.605-14.772l.26-1.477m0 17.726l-.26-1.477M10.698 4.614l-.26-1.477M16.5 19.794l-.75-1.299M7.5 4.205L12 12m6.894 5.785l-1.149-.964M6.256 7.178l-1.15-.964m15.352 8.864l-1.41-.513M4.954 9.435l-1.41-.514M12.002 12l-3.75 6.495"/></svg>
<span class="t" style="left:64.4px;top:642.2px;font-size:14px;line-height:24px;color:#e2e5ea;font-weight:700;letter-spacing:-0.297px;">Configuration</span>
<svg class="abs" style="left:244px;top:646px;width:16px;height:16px;color:#c9cdd4" viewBox="0 0 24 24" fill="none" stroke="currentColor" stroke-width="1.6" stroke-linecap="round" stroke-linejoin="round"><path d="M8.25 4.5l7.5 7.5-7.5 7.5"/></svg>
<span class="t" style="left:60px;top:138.3px;font-size:14px;line-height:20px;color:#e2e5ea;font-weight:700;letter-spacing:-0.592px;">Liste des Clients</span>
<span class="t" style="left:60px;top:178.3px;font-size:14px;line-height:20px;color:#e2e5ea;font-weight:700;letter-spacing:-0.306px;">Ajouter Client</span>
<span class="t" style="left:60px;top:274.3px;font-size:14px;line-height:20px;color:#e2e5ea;font-weight:700;letter-spacing:-0.657px;">Liste des Employés</span>
<span class="t" style="left:60px;top:314.3px;font-size:14px;line-height:20px;color:#e2e5ea;font-weight:700;letter-spacing:-0.363px;">Ajouter un Employé</span>
<div id="sdiv"></div><div id="avatar">AT</div>
<span class="t" style="left:80.1px;top:721.3px;font-size:14px;line-height:20px;color:#fff;font-weight:700;letter-spacing:-0.500px;">adm_codeur_toni</span>
<span class="t" style="left:107.2px;top:741.8px;font-size:12px;line-height:16px;color:#9ca3af;letter-spacing:0.149px;-webkit-text-stroke:.25px currentColor;">Utilisateur</span>
<svg class="abs" style="left:240px;top:729px;width:20px;height:20px;color:#9ca3af" viewBox="0 0 24 24" fill="none" stroke="currentColor" stroke-width="1.5" stroke-linecap="round" stroke-linejoin="round"><path d="M4.5 15.75l7.5-7.5 7.5 7.5"/></svg>
</div>
</body>
</html>
